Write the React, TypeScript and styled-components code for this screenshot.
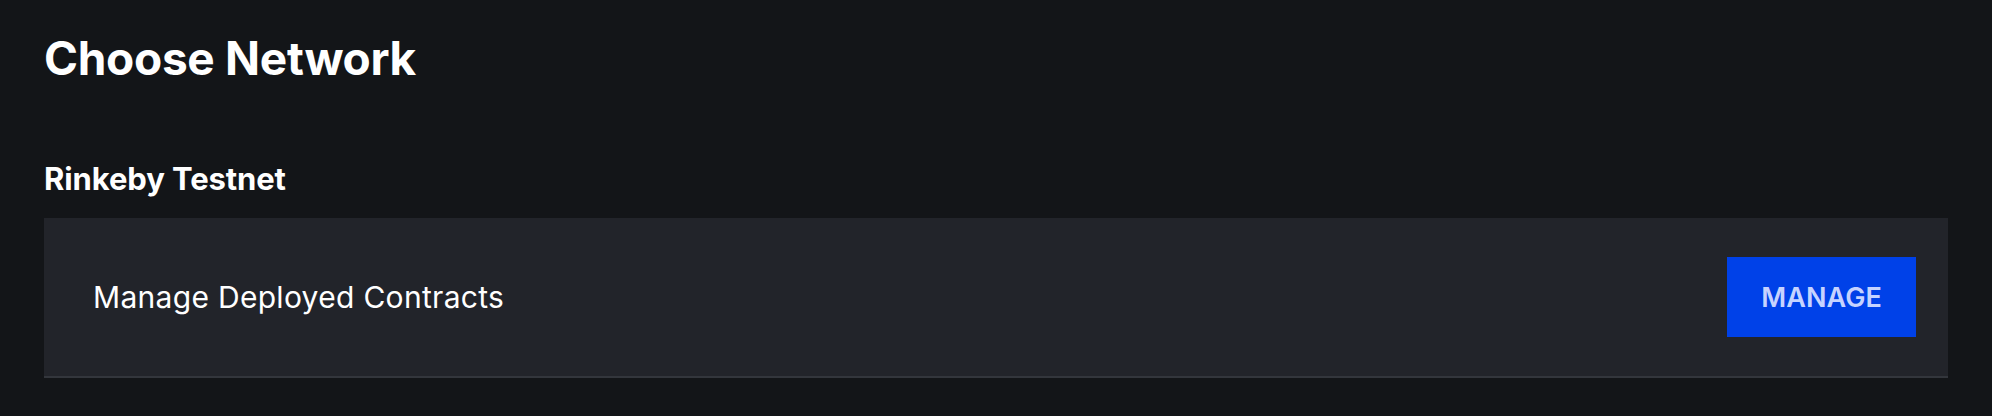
import React from "react";
import styled, { createGlobalStyle } from "styled-components";

const GlobalStyle = createGlobalStyle`
  html, body {
    margin: 0;
    padding: 0;
    background: #131518;
  }
  body {
    font-family: Inter, "Noto Sans", "Liberation Sans", sans-serif;
    color: #ffffff;
    -webkit-font-smoothing: antialiased;
  }
`;

const Page = styled.main`
  box-sizing: border-box;
  width: 100%;
  min-height: 416px;
  padding: 30px 44px 0;
  background: #131518;
`;

const Title = styled.h1`
  margin: 0;
  font-size: 46px;
  line-height: 56px;
  font-weight: 700;
  letter-spacing: -0.3px;
  color: #ffffff;
`;

const Section = styled.section`
  margin-top: 73px;
  display: flex;
  flex-direction: column;
  gap: 19px;
`;

const SectionTitle = styled.h2`
  margin: 0;
  font-size: 31px;
  line-height: 40px;
  font-weight: 700;
  letter-spacing: -0.1px;
  color: #ffffff;
`;

const Card = styled.div`
  display: flex;
  align-items: center;
  justify-content: space-between;
  padding: 39px 32px 39px 49px;
  background: #22242a;
  border-bottom: 2px solid #33363c;
`;

const Label = styled.span`
  font-size: 30px;
  line-height: 36px;
  font-weight: 400;
  letter-spacing: 0.3px;
  color: #ffffff;
`;

const Button = styled.button`
  height: 80px;
  padding: 0 34px;
  border: none;
  border-radius: 0;
  background: #0041e8;
  color: #c6d3ff;
  font-family: Inter, "Noto Sans", "Liberation Sans", sans-serif;
  font-size: 27px;
  font-weight: 600;
  letter-spacing: 0.1px;
  cursor: pointer;
`;

export default function App() {
  return (
    <>
      <GlobalStyle />
      <Page>
        <Title>Choose Network</Title>
        <Section>
          <SectionTitle>Rinkeby Testnet</SectionTitle>
          <Card>
            <Label>Manage Deployed Contracts</Label>
            <Button>MANAGE</Button>
          </Card>
        </Section>
      </Page>
    </>
  );
}
